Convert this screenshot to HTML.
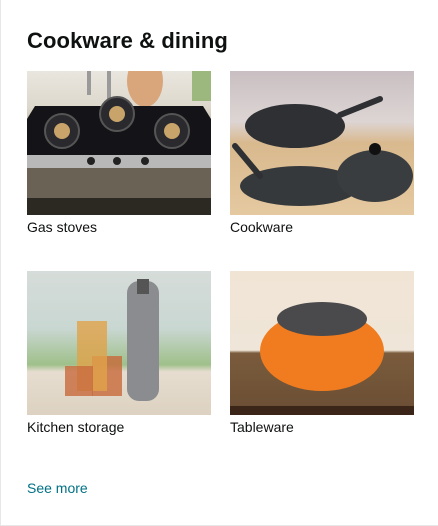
<!DOCTYPE html>
<html><head><style>
*{margin:0;padding:0;box-sizing:border-box}
body{width:438px;height:526px;background:#fff;font-family:"Liberation Sans",Arial,sans-serif;position:relative;overflow:hidden}
.card{position:absolute;left:0;top:0;width:438px;height:526px;border-left:1px solid #e7e7e7;border-bottom:1px solid #e7e7e7}
h2{position:absolute;left:26px;top:28px;font-size:22px;font-weight:bold;color:#0f1111;letter-spacing:0.1px}
.img{position:absolute;width:184px;height:144px;overflow:hidden}
.lab{position:absolute;font-size:14px;color:#0f1111}
.see{position:absolute;left:26px;top:480px;font-size:14px;color:#007185}
</style></head><body><div class="card">
<h2>Cookware &amp; dining</h2>

<div class="img" style="left:26px;top:71px;background:linear-gradient(#e9e6df 0%,#ddd8cc 25%,#cfc8bb 33%)">
<svg width="184" height="144" viewBox="0 0 184 144">
<ellipse cx="118" cy="10" rx="18" ry="26" fill="#d9a57a"/>
<rect x="80" y="0" width="4" height="30" fill="#9a9a9a"/><rect x="60" y="0" width="4" height="24" fill="#9a9a9a"/>
<rect x="165" y="0" width="19" height="30" fill="#9cb87e"/>
<path d="M8 35 L176 35 L184 48 L184 97 L0 97 L0 48 Z" fill="#141418"/>
<rect x="0" y="84" width="184" height="13" fill="#b8b8b8"/>
<rect x="0" y="97" width="184" height="30" fill="#6b6256"/>
<rect x="0" y="127" width="184" height="17" fill="#2c2822"/>
<circle cx="35" cy="60" r="17" fill="#2a2a2e" stroke="#555" stroke-width="2"/><circle cx="35" cy="60" r="8" fill="#c8a46a"/>
<circle cx="90" cy="43" r="17" fill="#2a2a2e" stroke="#555" stroke-width="2"/><circle cx="90" cy="43" r="8" fill="#c8a46a"/>
<circle cx="145" cy="60" r="17" fill="#2a2a2e" stroke="#555" stroke-width="2"/><circle cx="145" cy="60" r="8" fill="#c8a46a"/>
<circle cx="64" cy="90" r="4" fill="#222"/><circle cx="90" cy="90" r="4" fill="#222"/><circle cx="118" cy="90" r="4" fill="#222"/>
</svg></div>
<div class="lab" style="left:26px;top:219px">Gas stoves</div>

<div class="img" style="left:229px;top:71px;background:linear-gradient(#c9bfc2 0%,#ddd5d4 35%,#d9b98e 50%,#e5c9a0 100%)">
<svg width="184" height="144" viewBox="0 0 184 144">
<ellipse cx="65" cy="55" rx="50" ry="22" fill="#2e3033"/>
<line x1="110" y1="44" x2="150" y2="28" stroke="#2e3033" stroke-width="6" stroke-linecap="round"/>
<ellipse cx="70" cy="115" rx="60" ry="20" fill="#36393c"/>
<line x1="30" y1="105" x2="5" y2="75" stroke="#2e3033" stroke-width="6" stroke-linecap="round"/>
<ellipse cx="145" cy="105" rx="38" ry="26" fill="#3a3d40"/>
<circle cx="145" cy="78" r="6" fill="#111"/>
</svg></div>
<div class="lab" style="left:229px;top:219px">Cookware</div>

<div class="img" style="left:26px;top:271px;background:linear-gradient(#d6dcd9 0%,#c9d7d2 40%,#9fc08a 65%,#e6ddd0 70%,#ddd2c1 100%)">
<svg width="184" height="144" viewBox="0 0 184 144">
<rect x="100" y="10" width="32" height="120" rx="12" fill="#8a8c8f"/>
<rect x="110" y="8" width="12" height="15" fill="#555"/>
<rect x="65" y="85" width="30" height="40" fill="#c8693a" opacity="0.8"/>
<rect x="50" y="50" width="30" height="70" fill="#e0a24a" opacity="0.8"/>
<rect x="38" y="95" width="28" height="30" fill="#c86a3c" opacity="0.8"/>
</svg></div>
<div class="lab" style="left:26px;top:419px">Kitchen storage</div>

<div class="img" style="left:229px;top:271px;background:linear-gradient(#f0e5d5 0%,#efe5d8 55%,#7a5b3c 57%,#6a4e34 100%)">
<svg width="184" height="144" viewBox="0 0 184 144">
<ellipse cx="92" cy="80" rx="62" ry="40" fill="#f07c1f"/>
<ellipse cx="92" cy="48" rx="45" ry="17" fill="#4a4a4c"/>
<rect x="0" y="135" width="184" height="9" fill="#3a2518"/>
</svg></div>
<div class="lab" style="left:229px;top:419px">Tableware</div>

<div class="see">See more</div>
</div></body></html>
